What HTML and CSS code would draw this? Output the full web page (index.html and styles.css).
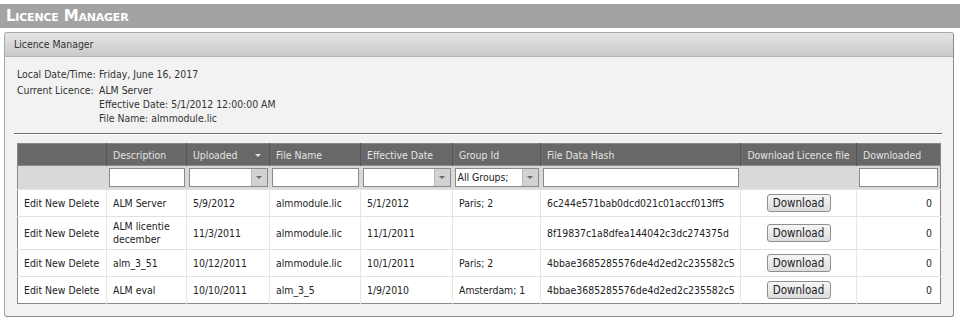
FILE: index.html
```html
<!DOCTYPE html>
<html lang="en">
<head>
    <meta charset="UTF-8">
    <title>Licence Manager</title>
    <link rel="stylesheet" href="styles.css">
</head>
<body>
    <div class="page-title">Licence Manager</div>

    <div class="panel">
        <div class="panel-header">Licence Manager</div>
        <div class="panel-body">
            <div class="info">
                <div class="info-label">Local Date/Time:</div>
                <div class="info-value">Friday, June 16, 2017</div>
                <div class="info-label">Current Licence:</div>
                <div class="info-value">
                    ALM Server<br>
                    Effective Date: 5/1/2012 12:00:00 AM<br>
                    File Name: almmodule.lic
                </div>
            </div>

            <div class="divider"></div>

            <table class="grid">
                <colgroup>
                    <col style="width:89px">
                    <col style="width:80px">
                    <col style="width:83px">
                    <col style="width:91px">
                    <col style="width:92px">
                    <col style="width:88px">
                    <col style="width:200px">
                    <col style="width:116px">
                    <col style="width:84px">
                </colgroup>
                <thead>
                    <tr class="head-row">
                        <th></th>
                        <th>Description</th>
                        <th class="sorted">Uploaded <span class="sort-arrow"></span></th>
                        <th>File Name</th>
                        <th>Effective Date</th>
                        <th>Group Id</th>
                        <th>File Data Hash</th>
                        <th class="center">Download Licence file</th>
                        <th>Downloaded</th>
                    </tr>
                    <tr class="filter-row">
                        <td></td>
                        <td><div class="filter"></div></td>
                        <td><div class="filter combo"><span class="combo-text"></span><span class="combo-btn"></span></div></td>
                        <td><div class="filter"></div></td>
                        <td><div class="filter combo"><span class="combo-text"></span><span class="combo-btn"></span></div></td>
                        <td><div class="filter combo"><span class="combo-text">All Groups;</span><span class="combo-btn"></span></div></td>
                        <td><div class="filter"></div></td>
                        <td></td>
                        <td><div class="filter"></div></td>
                    </tr>
                </thead>
                <tbody>
                    <tr>
                        <td class="actions">Edit New Delete</td>
                        <td>ALM Server</td>
                        <td>5/9/2012</td>
                        <td>almmodule.lic</td>
                        <td>5/1/2012</td>
                        <td>Paris; 2</td>
                        <td>6c244e571bab0dcd021c01accf013ff5</td>
                        <td class="center"><button class="btn">Download</button></td>
                        <td class="num">0</td>
                    </tr>
                    <tr>
                        <td class="actions">Edit New Delete</td>
                        <td>ALM licentie december</td>
                        <td>11/3/2011</td>
                        <td>almmodule.lic</td>
                        <td>11/1/2011</td>
                        <td></td>
                        <td>8f19837c1a8dfea144042c3dc274375d</td>
                        <td class="center"><button class="btn">Download</button></td>
                        <td class="num">0</td>
                    </tr>
                    <tr>
                        <td class="actions">Edit New Delete</td>
                        <td>alm_3_51</td>
                        <td>10/12/2011</td>
                        <td>almmodule.lic</td>
                        <td>10/1/2011</td>
                        <td>Paris; 2</td>
                        <td>4bbae3685285576de4d2ed2c235582c5</td>
                        <td class="center"><button class="btn">Download</button></td>
                        <td class="num">0</td>
                    </tr>
                    <tr>
                        <td class="actions">Edit New Delete</td>
                        <td>ALM eval</td>
                        <td>10/10/2011</td>
                        <td>alm_3_5</td>
                        <td>1/9/2010</td>
                        <td>Amsterdam; 1</td>
                        <td>4bbae3685285576de4d2ed2c235582c5</td>
                        <td class="center"><button class="btn">Download</button></td>
                        <td class="num">0</td>
                    </tr>
                </tbody>
            </table>
        </div>
    </div>
</body>
</html>
```

FILE: styles.css
```css
body {
    margin: 0;
    background: #ffffff;
    font-family: 'DejaVu Sans Condensed', 'DejaVu Sans', sans-serif;
    font-size: 10.4px;
    color: #333333;
}

.page-title {
    margin-top: 4px;
    height: 24px;
    line-height: 25px;
    padding-left: 6px;
    background: #a3a3a3;
    color: #ffffff;
    font-family: 'DejaVu Sans', sans-serif;
    font-size: 15px;
    font-weight: bold;
    font-variant: small-caps;
    letter-spacing: -0.2px;
}

.panel {
    margin: 4px 6px 0 4px;
    border: 1px solid #a8a8a8;
    border-right-color: #8a8a8a;
    border-bottom-color: #8a8a8a;
    border-radius: 3px;
    background: #f2f2f2;
    overflow: hidden;
}

.panel-header {
    height: 23px;
    line-height: 23px;
    padding-left: 9px;
    background: linear-gradient(#e3e3e3, #cacaca);
    border-bottom: 1px solid #b4b4b4;
    color: #333333;
}

.panel-body {
    padding: 10px 11px 12px 9px;
}

.info {
    display: grid;
    grid-template-columns: 82px auto;
    row-gap: 2px;
    margin-left: 3px;
    line-height: 14px;
}

.info-label {
    white-space: nowrap;
}

.divider {
    margin: 8px 0 8px;
    border-top: 1px solid #6e6e6e;
    border-bottom: 1px solid #ffffff;
}

.grid {
    margin-left: 3px;
    width: 923px;
    table-layout: fixed;
    border-collapse: collapse;
    border: 1px solid #888888;
    background: #ffffff;
}

.head-row th {
    height: 21px;
    padding: 0 6px;
    background: #686868;
    color: #e4e4e4;
    font-weight: normal;
    text-align: left;
    white-space: nowrap;
    border-left: 1px solid #545454;
}

.head-row th:first-child {
    border-left: none;
}

.head-row th.center {
    text-align: center;
}

.sorted {
    position: relative;
}

.sort-arrow {
    position: absolute;
    right: 8px;
    top: 10px;
    border-left: 3px solid transparent;
    border-right: 3px solid transparent;
    border-top: 3px solid #e4e4e4;
}

.filter-row td {
    height: 23px;
    padding: 0 2px 0 2px;
    background: #d9d9d9;
    border-top: 1px solid #8c8c8c;
}

.filter {
    height: 17px;
    border: 1px solid #8a8a8a;
    background: #ffffff;
    display: flex;
}

.combo-text {
    flex: 1;
    padding-left: 2px;
    line-height: 17px;
    color: #222222;
}

.combo-btn {
    width: 15px;
    border-left: 1px solid #b8b8b8;
    background: #d2d2d2;
    display: flex;
    align-items: center;
    justify-content: center;
}

.combo-btn::after {
    content: "";
    border-left: 3px solid transparent;
    border-right: 3px solid transparent;
    border-top: 3px solid #6a6a6a;
}

tbody td {
    padding: 3px 6px;
    line-height: 13px;
    height: 20px;
    color: #222222;
    border-top: 1px solid #e2e2e2;
    border-left: 1px solid #e6e6e6;
}

tbody td:first-child {
    border-left: none;
}

tbody td.actions {
    white-space: nowrap;
}

td.center {
    text-align: center;
}

td.num {
    text-align: right;
    padding-right: 8px;
}

.btn {
    height: 18px;
    width: 64px;
    padding: 0;
    font-family: inherit;
    font-size: 11.5px;
    color: #222222;
    border: 1px solid #8f8f8f;
    border-radius: 3px;
    background: linear-gradient(#f6f6f6, #dcdcdc);
}
```
